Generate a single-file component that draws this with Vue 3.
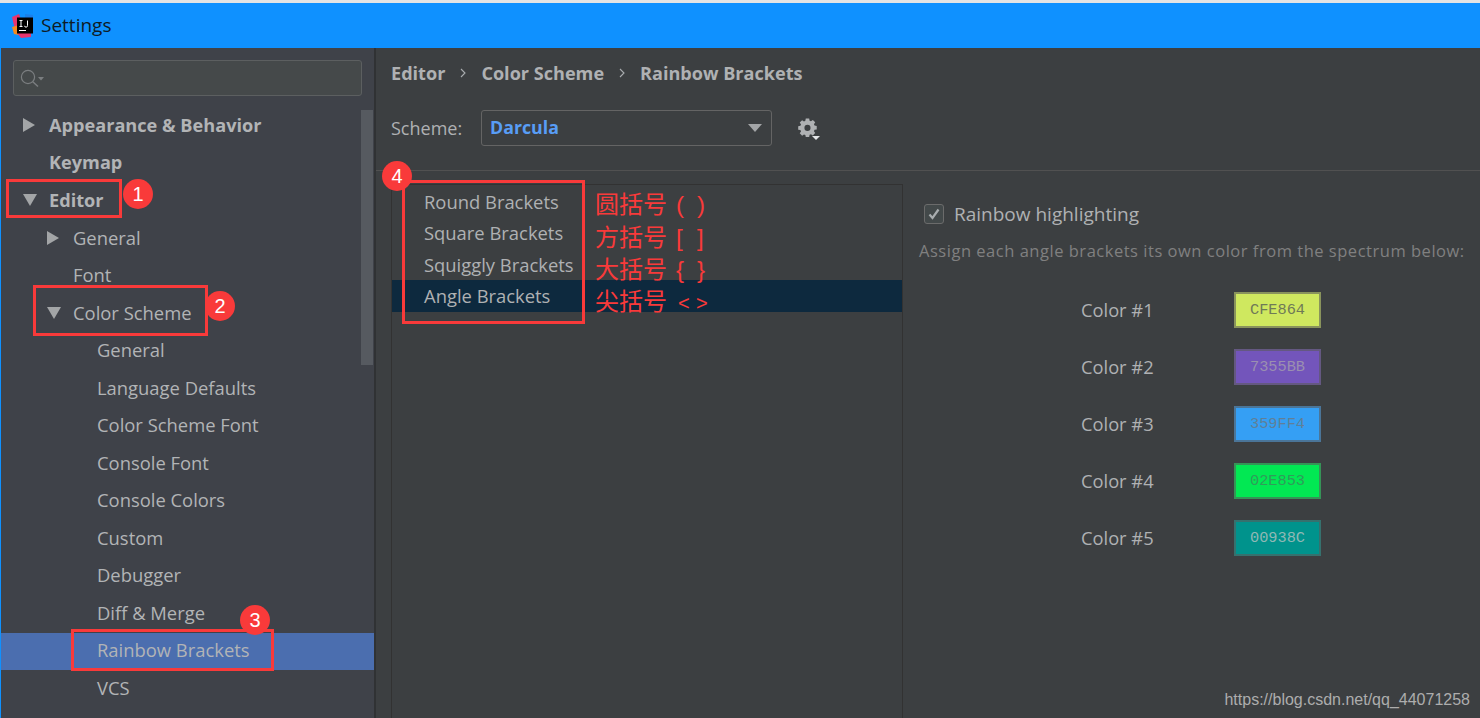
<script setup>
const tree = [
  { label: 'Appearance & Behavior', level: 0, bold: true, arrow: 'right' },
  { label: 'Keymap', level: 0, bold: true },
  { label: 'Editor', level: 0, bold: true, arrow: 'down' },
  { label: 'General', level: 1, arrow: 'right' },
  { label: 'Font', level: 1 },
  { label: 'Color Scheme', level: 1, arrow: 'down' },
  { label: 'General', level: 2 },
  { label: 'Language Defaults', level: 2 },
  { label: 'Color Scheme Font', level: 2 },
  { label: 'Console Font', level: 2 },
  { label: 'Console Colors', level: 2 },
  { label: 'Custom', level: 2 },
  { label: 'Debugger', level: 2 },
  { label: 'Diff & Merge', level: 2 },
  { label: 'Rainbow Brackets', level: 2, selected: true },
  { label: 'VCS', level: 2 }
]
const brackets = ['Round Brackets', 'Square Brackets', 'Squiggly Brackets', 'Angle Brackets']
const colors = [
  { n: 1, hex: 'CFE864', bg: '#cfe85f', fg: '#6f7a57' },
  { n: 2, hex: '7355BB', bg: '#7355bb', fg: '#9a8fb0' },
  { n: 3, hex: '359FF4', bg: '#359ff4', fg: '#5f7f98' },
  { n: 4, hex: '02E853', bg: '#02e853', fg: '#2f9c5a' },
  { n: 5, hex: '00938C', bg: '#00938c', fg: '#8fb8b5' }
]
const notes = [
  { text: '圆括号', a: '(', b: ')', top: 187 },
  { text: '方括号', a: '[', b: ']', top: 220 },
  { text: '大括号', a: '{', b: '}', top: 252 },
  { text: '尖括号', a: '<', b: '>', top: 284, small: true }
]
const boxes = [
  { left: 6, top: 179, width: 116, height: 39 },
  { left: 33, top: 285, width: 175, height: 51 },
  { left: 71, top: 629, width: 203, height: 42 },
  { left: 402, top: 180, width: 183, height: 144 }
]
const badges = [
  { n: 1, left: 123, top: 179 },
  { n: 2, left: 205, top: 291 },
  { n: 3, left: 240, top: 605 },
  { n: 4, left: 382, top: 161 }
]
</script>

<template>
  <div class="window">
    <header class="titlebar">
      <svg class="logo" width="24" height="26" viewBox="0 0 24 26">
        <polygon points="1,4 8,1 12,12 4,17" fill="#e8346f" />
        <polygon points="1,14 8,12 8,22 3,21" fill="#f58a1f" />
        <polygon points="14,1 22,2 22,14 14,10" fill="#1c7fe8" />
        <polygon points="6,20 20,14 20,24 10,25" fill="#e8346f" />
        <rect x="6" y="4.5" width="16" height="16" fill="#000" />
        <rect x="8" y="17" width="7" height="1" fill="#fff" />
        <path d="M8.5 7.5h3M10 7.5v6M8.5 13.5h3M16.5 7.5v5a1.3 1.3 0 0 1-3 .3" fill="none" stroke="#fff" stroke-width="1" />
      </svg>
      <span class="title">Settings</span>
    </header>
    <div class="body">
      <aside class="sidebar">
        <div class="search">
          <svg width="34" height="22" viewBox="0 0 34 22">
            <circle cx="8" cy="10" r="6.6" fill="none" stroke="#7b7e80" stroke-width="1.2" />
            <path d="M12.8 14.8 18 19.5" stroke="#7b7e80" stroke-width="1.5" />
            <path d="M18 10h6l-3 3.5z" fill="#7b7e80" />
          </svg>
        </div>
        <div class="scrollbar"></div>
        <nav class="tree">
          <div
            v-for="(row, i) in tree"
            :key="i"
            class="row"
            :class="['lvl' + row.level, { bold: row.bold, selected: row.selected }]"
          >
            <span v-if="row.arrow" class="arrow" :class="row.arrow"></span>
            <span class="label">{{ row.label }}</span>
          </div>
        </nav>
      </aside>
      <div class="splitter"></div>
      <main class="content">
        <div class="crumbs">
          <span>Editor</span>
          <svg class="sep" width="8" height="12" viewBox="0 0 8 12"><path d="M2 2l4 4-4 4" fill="none" stroke="#a9adaf" stroke-width="1.1" /></svg>
          <span>Color Scheme</span>
          <svg class="sep" width="8" height="12" viewBox="0 0 8 12"><path d="M2 2l4 4-4 4" fill="none" stroke="#a9adaf" stroke-width="1.1" /></svg>
          <span>Rainbow Brackets</span>
        </div>
        <div class="scheme">
          <span class="scheme-label">Scheme:</span>
          <div class="select">
            <span class="select-value">Darcula</span>
            <span class="select-caret"></span>
          </div>
          <svg class="gear" width="24" height="26" viewBox="0 0 24 26">
            <path fill="#afb1b3" fill-rule="evenodd" d="M9.5 3h4l.5 2.6 1.6.7 2.2-1.5 2.8 2.8-1.5 2.2.7 1.6 2.6.5v4l-2.6.5-.7 1.6 1.5 2.2-2.8 2.8-2.2-1.5-1.6.7-.5 2.6h-4L9 22.5l-1.6-.7-2.2 1.5-2.8-2.8 1.5-2.2-.7-1.6L.6 16.2v-4l2.6-.5.7-1.6-1.5-2.2 2.8-2.8 2.2 1.5L9 5.6zM11.5 10.5a3.6 3.6 0 1 0 0 7.2 3.6 3.6 0 0 0 0-7.2z" transform="translate(1.7 .9) scale(.85)" />
            <path d="M16 21h8l-4 4z" fill="#e4e6e8" />
          </svg>
        </div>
        <div class="rule"></div>
        <div class="panels">
          <div class="list">
            <div v-for="(b, i) in brackets" :key="b" class="list-row" :class="{ active: i === 3 }">{{ b }}</div>
          </div>
          <div class="detail">
            <label class="check">
              <span class="box">
                <svg width="14" height="14" viewBox="0 0 14 14"><path d="M2.5 7.5l3 3.5 6-8.5" fill="none" stroke="#a9adaf" stroke-width="2.2" /></svg>
              </span>
              Rainbow highlighting
            </label>
            <p class="hint">Assign each angle brackets its own color from the spectrum below:</p>
            <div class="colors">
              <div v-for="c in colors" :key="c.n" class="color-row">
                <span class="color-label">Color #{{ c.n }}</span>
                <span class="swatch" :style="{ background: c.bg, color: c.fg }">{{ c.hex }}</span>
              </div>
            </div>
          </div>
        </div>
      </main>
    </div>

    <div v-for="(b, i) in boxes" :key="'box' + i" class="redbox"
      :style="{ left: b.left + 'px', top: b.top + 'px', width: b.width + 'px', height: b.height + 'px' }"></div>
    <div v-for="b in badges" :key="'badge' + b.n" class="badge"
      :style="{ left: b.left + 'px', top: b.top + 'px' }">{{ b.n }}</div>
    <div v-for="n in notes" :key="n.text" class="note" :class="{ small: n.small }" :style="{ top: n.top + 'px' }">{{ n.text }}<span class="tail"><span class="tail-a">{{ n.a }}</span><span>{{ n.b }}</span></span></div>
    <div class="watermark">https://blog.csdn.net/qq_44071258</div>
  </div>
</template>

<style>
html, body { margin: 0; background: #3c3f41; }
</style>

<style scoped>
.window {
  position: relative;
  width: 1480px;
  height: 718px;
  overflow: hidden;
  display: flex;
  flex-direction: column;
  background: #3c3f41;
  border-top: 3px solid #e4e4e4;
  box-sizing: border-box;
  font-family: "Open Sans", "Noto Sans", sans-serif;
  color: #afb1b3;
}
.titlebar {
  height: 45px;
  flex: none;
  background: #0f91ff;
  display: flex;
  align-items: center;
  padding-left: 11px;
  gap: 6px;
}
.logo { flex: none; }
.title {
  font-size: 19px;
  color: #0e1b26;
  margin-top: -2px;
  font-family: "Open Sans", sans-serif;
}
.body {
  flex: 1;
  display: flex;
  min-height: 0;
  border-left: 1px solid #0f91ff;
}
.sidebar {
  position: relative;
  width: 373px;
  flex: none;
  background: #3f4249;
  padding-top: 12px;
  box-sizing: border-box;
}
.search {
  margin-left: 12px;
  width: 349px;
  height: 36px;
  box-sizing: border-box;
  border: 1px solid #5c5f60;
  border-radius: 3px;
  background: #45494a;
  display: flex;
  align-items: center;
  padding-left: 6px;
}
.scrollbar {
  position: absolute;
  left: 360px;
  top: 62px;
  width: 12px;
  height: 255px;
  background: #565a60;
}
.tree {
  margin-top: 11.5px;
}
.row {
  position: relative;
  height: 37.5px;
  display: flex;
  align-items: center;
  font-size: 18.4px;
  color: #b2b4b6;
  white-space: nowrap;
}
.label { margin-bottom: 3px; }
.row.bold { font-weight: 700; font-size: 18.15px; }
.lvl0 { padding-left: 48px; }
.lvl1 { padding-left: 72px; }
.lvl2 { padding-left: 96px; }
.row.selected { background: #4b6eaf; }
.arrow {
  position: absolute;
  width: 0;
  height: 0;
  margin-top: -2px;
}
.arrow.right {
  border-left: 12px solid #a3a5a7;
  border-top: 7px solid transparent;
  border-bottom: 7px solid transparent;
}
.arrow.down {
  border-top: 12px solid #a3a5a7;
  border-left: 7px solid transparent;
  border-right: 7px solid transparent;
}
.lvl0 .arrow { left: 22px; }
.lvl1 .arrow { left: 46px; }
.splitter {
  width: 2px;
  flex: none;
  background: #303234;
}
.content {
  flex: 1;
  min-width: 0;
  background: #3c3f41;
  display: flex;
  flex-direction: column;
}
.crumbs {
  height: 50px;
  padding-left: 15px;
  display: flex;
  align-items: center;
  font-size: 18.1px;
  font-weight: 700;
  color: #afb1b3;
}
.sep { margin: 0 14px; }
.scheme {
  display: flex;
  align-items: center;
  height: 36px;
  margin-top: 12px;
  padding-left: 15px;
}
.scheme-label { font-size: 18px; width: 90px; flex: none; }
.select {
  width: 291px;
  height: 36px;
  box-sizing: border-box;
  border: 1px solid #646464;
  border-radius: 3px;
  display: flex;
  align-items: center;
  justify-content: space-between;
  padding: 0 9px 0 8px;
}
.select-value { font-size: 17.8px; font-weight: 700; color: #589df6; margin-top: -2px; }
.select-caret {
  width: 0;
  height: 0;
  border-top: 8px solid #a3a5a7;
  border-left: 7px solid transparent;
  border-right: 7px solid transparent;
}
.gear { margin-left: 24px; }
.rule {
  height: 1px;
  background: #515151;
  margin-top: 24px;
}
.panels {
  display: flex;
  flex: 1;
  margin-top: 13px;
  margin-left: 15px;
  min-height: 0;
}
.list {
  width: 512px;
  flex: none;
  box-sizing: border-box;
  border-left: 1px solid #323232;
  border-right: 1px solid #323232;
  border-top: 1px solid #323232;
  padding-top: .5px;
}
.list-row {
  height: 31.5px;
  line-height: 31.5px;
  padding-left: 32px;
  font-size: 18.4px;
  white-space: nowrap;
  color: #afb1b3;
}
.list-row.active { background: #0d293e; }
.detail {
  flex: 1;
  padding-left: 16px;
  padding-top: 19px;
  min-width: 0;
}
.check {
  display: flex;
  align-items: center;
  font-size: 19px;
  height: 22px;
  margin-left: 5px;
  gap: 10px;
  color: #afb1b3;
}
.box {
  width: 20px;
  height: 20px;
  box-sizing: border-box;
  border: 1px solid #6b6b6b;
  border-radius: 3px;
  background: #43494a;
  display: flex;
  align-items: center;
  justify-content: center;
}
.hint {
  margin: 15px 0 0;
  font-size: 16.5px;
  letter-spacing: .52px;
  line-height: 22px;
  color: #808080;
  white-space: nowrap;
}
.colors {
  margin-top: 30px;
  display: flex;
  flex-direction: column;
  gap: 21px;
}
.color-row {
  display: flex;
  align-items: center;
  height: 36px;
  padding-left: 162px;
}
.color-label { width: 153px; flex: none; font-size: 18.3px; color: #afb1b3; margin-top: -1px; }
.swatch {
  width: 87px;
  height: 36px;
  box-sizing: border-box;
  border: 2px solid rgba(90, 90, 90, .6);
  display: flex;
  align-items: center;
  justify-content: center;
  font-family: "Liberation Mono", monospace;
  font-size: 15.3px;
}
.redbox {
  position: absolute;
  box-sizing: border-box;
  border: 3px solid #f93a3a;
  margin-top: -3px;
}
.badge {
  position: absolute;
  margin-top: -3px;
  width: 30px;
  height: 30px;
  border-radius: 50%;
  background: #f93a3a;
  color: #fff;
  font-size: 20px;
  text-align: center;
  line-height: 30px;
  font-family: "Liberation Sans", sans-serif;
}
.note {
  position: absolute;
  margin-top: -3px;
  left: 595px;
  font-family: "Noto Sans CJK SC", sans-serif;
  font-size: 24px;
  line-height: 32px;
  color: #f93a3a;
  white-space: pre;
}
.tail { font-family: "Liberation Sans", sans-serif; margin-left: 9px; }
.tail-a { display: inline-block; width: 21px; }
.note.small .tail { font-size: 20px; margin-left: 11px; }
.note.small .tail-a { width: 18px; }
.watermark {
  position: absolute;
  right: 10px;
  bottom: 9px;
  font-family: "Liberation Sans", sans-serif;
  font-size: 16px;
  color: #adadad;
}
</style>
